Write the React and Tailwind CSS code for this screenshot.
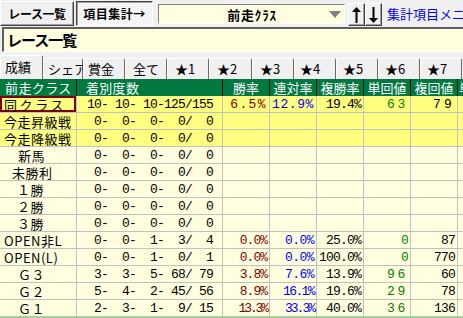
import React from "react";

const E = null;
const Z = "  0-  0-  0-  0/  0";
const T08 = "tracking-[-0.8px]";

const rows = [
  { label: "同クラス", pl: "pl-[4px]", lt: "tracking-[2.6px]", hl: true, sel: true,
    deg: " 10- 10- 10-125/155",
    win: ["6.5%", "tracking-[1.4px]"], ren: ["12.9%", "tracking-[0.6px]"], fuku: ["19.4%", T08], tan: ["63", "tracking-[2.7px]"], fk: ["79", "tracking-[3.2px]"] },
  { label: "今走昇級戦", hl: true, deg: Z },
  { label: "今走降級戦", hl: true, deg: Z },
  { label: "新馬", pl: "pl-[18px]", deg: Z },
  { label: "未勝利", pl: "pl-[12px]", deg: Z },
  { label: "１勝", pl: "pl-[17px]", deg: Z },
  { label: "２勝", pl: "pl-[17px]", deg: Z },
  { label: "３勝", pl: "pl-[17px]", deg: Z },
  { label: "OPEN非L", deg: "  0-  0-  1-  3/  4",
    win: ["0.0%", "tracking-[-1px]"], ren: ["0.0%", "tracking-[-0.55px]"], fuku: ["25.0%", T08], tan: ["0", T08], fk: ["87", T08] },
  { label: "OPEN(L)", deg: "  0-  0-  1-  0/  1",
    win: ["0.0%", "tracking-[-1px]"], ren: ["0.0%", "tracking-[-0.55px]"], fuku: ["100.0%", T08], tan: ["0", T08], fk: ["770", T08] },
  { label: "Ｇ３", pl: "pl-[18px]", deg: "  3-  3-  5- 68/ 79",
    win: ["3.8%", "tracking-[-1px]"], ren: ["7.6%", "tracking-[-0.55px]"], fuku: ["13.9%", T08], tan: ["96", "tracking-[2.7px]"], fk: ["60", T08] },
  { label: "Ｇ２", pl: "pl-[18px]", deg: "  5-  4-  2- 45/ 56",
    win: ["8.9%", "tracking-[-1px]"], ren: ["16.1%", "tracking-[-1.6px]"], fuku: ["19.6%", T08], tan: ["29", "tracking-[2.7px]"], fk: ["78", T08] },
  { label: "Ｇ１", pl: "pl-[18px]", deg: "  2-  3-  1-  9/ 15",
    win: ["13.3%", "tracking-[-2.1px]"], ren: ["33.3%", "tracking-[-2px]"], fuku: ["40.0%", T08], tan: ["36", "tracking-[2.7px]"], fk: ["136", T08] },
];

const tabs = [
  ["成績", "w-[43px]", "pl-[4px]"],
  ["シェア", "w-[40px]", "pl-[4px]"],
  ["賞金", "w-[42px]", "pl-[4px]"],
  ["全て", "w-[42px]", "pl-[7px]"],
  ["★1", "w-[42px]", "pl-[7px]"],
  ["★2", "w-[43px]", "pl-[7px]"],
  ["★3", "w-[42px]", "pl-[7px]"],
  ["★4", "w-[42px]", "pl-[5px]"],
  ["★5", "w-[42px]", "pl-[6px]"],
  ["★6", "w-[42px]", "pl-[6px]"],
  ["★7", "w-[42px]", "pl-[6px]"],
];

function Num({ v, color }) {
  return (
    <div className={`w-[47px] shrink-0 h-full border-r border-[#c0c0c0] flex items-center justify-end pr-[2px] font-['Liberation_Mono',monospace] text-[13px] leading-none whitespace-pre ${color}`}>
      {v ? <span className={v[1]}>{v[0]}</span> : null}
    </div>
  );
}

function ArrowBtn({ up }) {
  return (
    <div className="mt-[3px] w-[17px] h-[23px] shrink-0 flex items-center justify-center border border-t-white border-l-white border-r-[#404040] border-b-[#404040] shadow-[inset_-1px_-1px_0_#a0a0a0] bg-[#f0f0f0]">
      <svg width="9" height="16" viewBox="0 0 9 16">
        {up ? (
          <g fill="#000">
            <polygon points="4.5,0 9,5 0,5" />
            <rect x="3.5" y="4" width="2" height="12" />
          </g>
        ) : (
          <g fill="#000">
            <polygon points="4.5,16 9,11 0,11" />
            <rect x="3.5" y="0" width="2" height="12" />
          </g>
        )}
      </svg>
    </div>
  );
}

export default function App() {
  return (
    <div className="w-[463px] h-[318px] overflow-hidden bg-[#f0f0f0] font-['Noto_Sans_CJK_JP',sans-serif] text-black">
      {/* top bar */}
      <div className="h-[27px] flex items-start">
        <div className="mt-[1px] w-[74px] h-[25px] shrink-0 flex items-center justify-center border border-t-white border-l-white border-r-[#404040] border-b-[#404040] shadow-[inset_-1px_-1px_0_#a0a0a0] text-[12px] font-bold tracking-[-0.4px] whitespace-nowrap">
          レース一覧
        </div>
        <div className="ml-[2px] mt-[1px] w-[77px] h-[25px] shrink-0 flex items-center justify-center border border-t-[#404040] border-l-[#404040] border-r-white border-b-white shadow-[inset_1px_1px_0_#a0a0a0] bg-[#f4f4f4] text-[12px] font-bold tracking-[0.5px] whitespace-nowrap">
          項目集計→
        </div>
        <div className="ml-[5px] mt-[4px] w-[187px] h-[20px] shrink-0 flex items-center border border-t-[#808080] border-l-[#808080] border-r-white border-b-white bg-[#ffffe0]">
          <span className="flex-1 text-center pl-[16px] text-[13px] font-bold leading-none tracking-[0.8px] whitespace-nowrap">前走ｸﾗｽ</span>
          <svg width="12" height="7" viewBox="0 0 12 7" className="mr-[3px] shrink-0">
            <polygon points="0,0 12,0 6,7" fill="#808080" />
          </svg>
        </div>
        <div className="ml-[3px] flex">
          <ArrowBtn up />
          <ArrowBtn />
        </div>
        <div className="ml-[5px] mt-[6px] text-[13px] leading-[16px] text-[#0000ff] whitespace-nowrap">
          集計項目メニュー
        </div>
      </div>

      {/* title */}
      <div className="h-[25px] ml-[2px] flex items-center border-t-2 border-l-2 border-[#606060] border-b border-b-white bg-[#ffffe0] pl-[3px] text-[15px] font-bold tracking-[-1px] whitespace-nowrap">
        レース一覧
      </div>
      <div className="h-[3px]" />

      {/* tabs */}
      <div className="h-[24px] flex items-end">
        {tabs.map(([t, w, pl], i) => (
          <div
            key={t}
            className={`${w} ${pl} ${i === 0 ? "h-[24px] pt-[3px]" : "h-[21px] pt-[2px]"} shrink-0 border-t border-l border-r border-t-white border-l-white border-r-[#696969] rounded-t-[2px] text-[13px] leading-[16px] whitespace-nowrap bg-[#f0f0f0]`}
          >
            {t}
          </div>
        ))}
      </div>

      {/* header */}
      <div className="flex h-[17px] w-max bg-[#007840] text-white text-[13px] leading-none">
        <div className="w-[77px] shrink-0 border-r border-[#101010] flex items-center pl-[5px] tracking-[0.4px] whitespace-nowrap">前走クラス</div>
        <div className="w-[146px] shrink-0 border-r border-[#101010] flex items-center pl-[9px] tracking-[0.3px] whitespace-nowrap">着別度数</div>
        {["勝率", "連対率", "複勝率", "単回値", "複回値"].map((h) => (
          <div key={h} className="w-[47px] shrink-0 border-r border-[#101010] flex items-center justify-center whitespace-nowrap">
            {h}
          </div>
        ))}
        <div className="w-[47px] shrink-0 flex items-center pl-[1px] whitespace-nowrap">単勝率</div>
      </div>

      {/* body */}
      {rows.map((r) => (
        <div key={r.label} className={`flex h-[17px] w-max border-b border-[#c0c0c0] ${r.hl ? "bg-[#ffff80]" : "bg-[#ffffe0]"}`}>
          <div className={`w-[77px] shrink-0 h-full border-r border-[#c0c0c0] flex items-center whitespace-nowrap text-[13px] leading-none ${r.pl || "pl-[4px]"} ${r.lt || "tracking-[0.5px]"} ${r.sel ? "shadow-[inset_0_0_0_2px_#800000]" : ""}`}>
            {r.label}
          </div>
          <div className="w-[146px] shrink-0 h-full border-r border-[#c0c0c0] flex items-center justify-end pr-[9px] font-['Liberation_Mono',monospace] text-[13px] leading-none whitespace-pre">
            <span className={T08}>{r.deg}</span>
          </div>
          <Num v={r.win} color="text-[#800000]" />
          <Num v={r.ren} color="text-[#0000ff]" />
          <Num v={r.fuku} color="text-black" />
          <Num v={r.tan} color="text-[#008000]" />
          <Num v={r.fk} color="text-black" />
          <div className="w-[47px] shrink-0 h-full" />
        </div>
      ))}
      <div className="h-[2px] w-full bg-[#80e080]" />
    </div>
  );
}
